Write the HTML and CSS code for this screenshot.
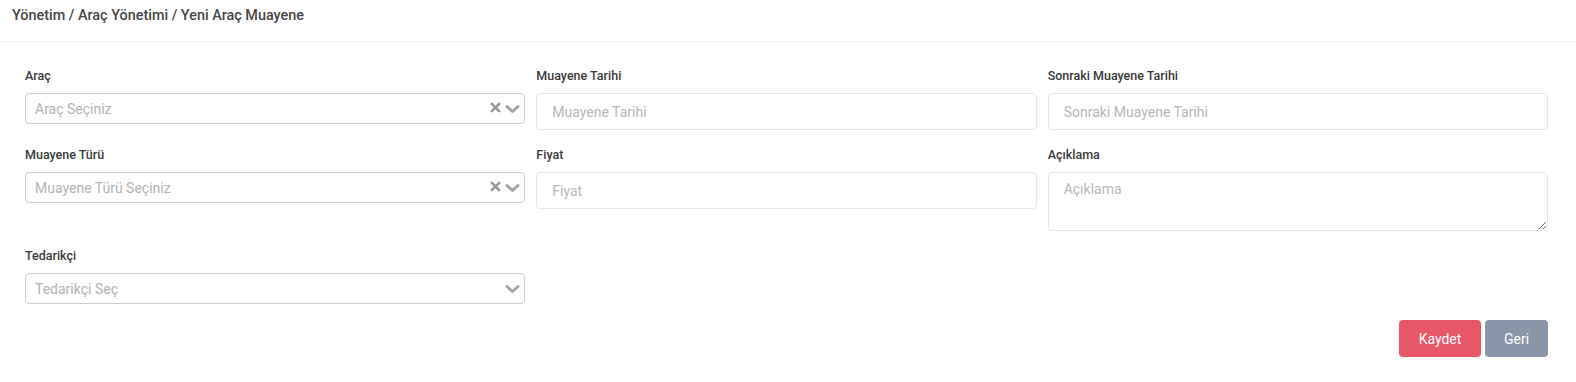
FILE: index.html
```html
<!DOCTYPE html>
<html lang="tr">
<head>
<meta charset="utf-8">
<title>Yeni Araç Muayene</title>
<link rel="stylesheet" href="styles.css">
</head>
<body>
<header class="topbar">Yönetim / Araç Yönetimi / Yeni Araç Muayene</header>
<main class="content">
  <div class="form-grid">
    <div class="field">
      <label class="label">Araç</label>
      <div class="select">
        <span class="select-ph">Araç Seçiniz</span>
        <span class="select-icons">
          <svg class="ico-x" width="11" height="11" viewBox="0 0 11 11"><path d="M1.8 1.8 L9.2 9.2 M9.2 1.8 L1.8 9.2" stroke="#999999" stroke-width="2.6" stroke-linecap="round"/></svg>
          <svg class="ico-chev" width="15" height="10" viewBox="0 0 15 10"><path d="M2 2.5 L7.5 7.5 L13 2.5" fill="none" stroke="#a3a3a3" stroke-width="3" stroke-linecap="round" stroke-linejoin="round"/></svg>
        </span>
      </div>
    </div>
    <div class="field">
      <label class="label">Muayene Tarihi</label>
      <input class="input" type="text" placeholder="Muayene Tarihi">
    </div>
    <div class="field">
      <label class="label">Sonraki Muayene Tarihi</label>
      <input class="input" type="text" placeholder="Sonraki Muayene Tarihi">
    </div>

    <div class="field">
      <label class="label">Muayene Türü</label>
      <div class="select">
        <span class="select-ph">Muayene Türü Seçiniz</span>
        <span class="select-icons">
          <svg class="ico-x" width="11" height="11" viewBox="0 0 11 11"><path d="M1.8 1.8 L9.2 9.2 M9.2 1.8 L1.8 9.2" stroke="#999999" stroke-width="2.6" stroke-linecap="round"/></svg>
          <svg class="ico-chev" width="15" height="10" viewBox="0 0 15 10"><path d="M2 2.5 L7.5 7.5 L13 2.5" fill="none" stroke="#a3a3a3" stroke-width="3" stroke-linecap="round" stroke-linejoin="round"/></svg>
        </span>
      </div>
    </div>
    <div class="field">
      <label class="label">Fiyat</label>
      <input class="input" type="text" placeholder="Fiyat">
    </div>
    <div class="field">
      <label class="label">Açıklama</label>
      <textarea class="textarea" placeholder="Açıklama"></textarea>
    </div>

    <div class="field">
      <label class="label">Tedarikçi</label>
      <div class="select">
        <span class="select-ph">Tedarikçi Seç</span>
        <span class="select-icons">
          <svg class="ico-chev" width="15" height="10" viewBox="0 0 15 10"><path d="M2 2.5 L7.5 7.5 L13 2.5" fill="none" stroke="#a3a3a3" stroke-width="3" stroke-linecap="round" stroke-linejoin="round"/></svg>
        </span>
      </div>
    </div>
  </div>
  <div class="actions">
    <button class="btn btn-save" type="button">Kaydet</button>
    <button class="btn btn-back" type="button">Geri</button>
  </div>
</main>
</body>
</html>
```

FILE: styles.css
```css
* { box-sizing: border-box; }

html, body {
  margin: 0;
  padding: 0;
  background: #ffffff;
  font-family: Roboto, "Liberation Sans", Arial, sans-serif;
  color: #3f4254;
}

.topbar {
  height: 42px;
  padding: 7px 12px 0;
  line-height: 18px;
  font-size: 14.4px;
  font-weight: 500;
  color: #464646;
  border-bottom: 1px solid #ebedf3;
}

.content {
  padding: 25px 28px 0 25px;
}

.form-grid {
  display: grid;
  grid-template-columns: repeat(3, 1fr);
  column-gap: 11px;
  row-gap: 16px;
  align-items: start;
}

.field {
  display: flex;
  flex-direction: column;
}

.label {
  font-size: 12.5px;
  font-weight: 500;
  line-height: 18px;
  color: #3a3a3a;
  margin-bottom: 8px;
}

.select {
  height: 31px;
  border: 1px solid #cccccc;
  border-radius: 4px;
  display: flex;
  align-items: center;
  padding: 0 4px 0 9px;
  background: #fff;
}

.select-ph {
  flex: 1;
  font-size: 14px;
  color: #b3b3b3;
}

.select-icons {
  display: flex;
  align-items: center;
  gap: 4px;
}

.ico-x { display: block; margin-top: -2px; }
.ico-chev { display: block; }

.input,
.textarea {
  font-family: Roboto, "Liberation Sans", Arial, sans-serif;
  font-size: 14px;
  color: #3f4254;
  border: 1px solid #e4e6ef;
  border-radius: 4px;
  padding: 0 15px;
  background: #fff;
  outline: none;
  width: 100%;
}

.input { height: 37px; }

.textarea {
  height: 59px;
  padding-top: 8px;
  resize: vertical;
  display: block;
}

.input::placeholder,
.textarea::placeholder {
  color: #b7b7b7;
}

.actions {
  display: flex;
  justify-content: flex-end;
  gap: 4px;
  margin-top: 16px;
}

.btn {
  height: 37px;
  border: none;
  border-radius: 4px;
  color: #ffffff;
  font-family: Roboto, "Liberation Sans", Arial, sans-serif;
  font-size: 14px;
  padding: 0;
  cursor: pointer;
}

.btn-save {
  width: 82px;
  background: #e95667;
}

.btn-back {
  width: 63px;
  background: #8996a9;
}
```
